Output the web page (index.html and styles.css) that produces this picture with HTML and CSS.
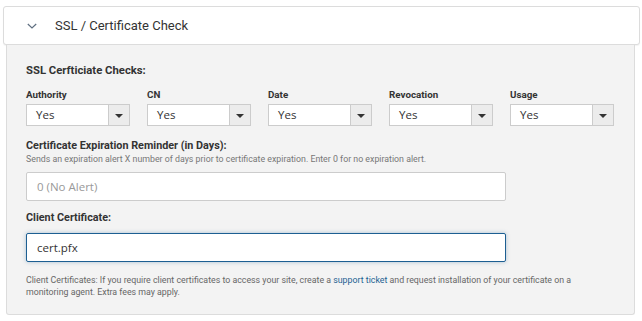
FILE: index.html
```html
<!DOCTYPE html>
<html lang="en">
<head>
  <meta charset="UTF-8">
  <meta name="viewport" content="width=device-width, initial-scale=1.0">
  <title>SSL / Certificate Check</title>
  <link rel="stylesheet" href="styles.css">
</head>
<body>
  <div class="section">
    <div class="section-head">
      <svg class="chevron" width="10" height="8" viewBox="0 0 10 8">
        <path d="M0.8 2 L5 6 L9.2 2" fill="none" stroke="#5f6f80" stroke-width="1.2"/>
      </svg>
      <span class="section-title">SSL / Certificate Check</span>
    </div>
    <div class="section-body">
      <div class="group-title">SSL Cerfticiate Checks:</div>
      <div class="checks">
        <div class="check">
          <label>Authority</label>
          <div class="select"><span>Yes</span><span class="arrow"></span></div>
        </div>
        <div class="check">
          <label>CN</label>
          <div class="select"><span>Yes</span><span class="arrow"></span></div>
        </div>
        <div class="check">
          <label>Date</label>
          <div class="select"><span>Yes</span><span class="arrow"></span></div>
        </div>
        <div class="check">
          <label>Revocation</label>
          <div class="select"><span>Yes</span><span class="arrow"></span></div>
        </div>
        <div class="check">
          <label>Usage</label>
          <div class="select"><span>Yes</span><span class="arrow"></span></div>
        </div>
      </div>

      <div class="field">
        <label>Certificate Expiration Reminder (in Days):</label>
        <div class="hint">Sends an expiration alert X number of days prior to certificate expiration. Enter 0 for no expiration alert.</div>
        <div class="input placeholder">0 (No Alert)</div>
      </div>

      <div class="field client">
        <label>Client Certificate:</label>
        <div class="input focused">cert.pfx</div>
      </div>

      <p class="note">Client Certificates: If you require client certificates to access your site, create a <a href="#">support ticket</a> and request installation of your certificate on a monitoring agent. Extra fees may apply.</p>
    </div>
  </div>
</body>
</html>
```

FILE: styles.css
```css
body {
  margin: 0;
  padding: 6px 2px 0 3px;
  background: #fff;
  font-family: Roboto, "Liberation Sans", sans-serif;
  color: #333;
}
.section-head {
  display: flex;
  align-items: center;
  height: 37px;
  border: 1px solid #dcdcdc;
  border-radius: 3px;
  background: #fff;
  box-shadow: 0 1px 1px rgba(0,0,0,0.05);
}
.chevron {
  margin-left: 23px;
  margin-right: 18px;
}
.section-title {
  font-size: 13px;
  color: #333;
}
.section-body {
  margin: 0 5px 0 3px;
  background: #f3f3f3;
  border: 1px solid #dcdcdc;
  border-top: none;
  border-radius: 0 0 3px 3px;
  padding: 19px 19px 16px 19px;
}
.group-title {
  font-size: 11.3px;
  line-height: 14px;
  font-weight: bold;
  color: #333;
  margin-bottom: 11px;
}
.checks {
  display: flex;
  gap: 17px;
}
label {
  display: block;
  font-size: 10.8px;
  line-height: 12px;
  font-weight: bold;
  color: #333;
}
.check label {
  font-size: 9.8px;
  margin-bottom: 3px;
}
.select {
  display: flex;
  width: 102px;
  height: 20px;
  border: 1px solid #ccc;
  background: #fff;
  font-family: "Open Sans", sans-serif;
  font-size: 11.5px;
  color: #333;
}
.select span:first-child {
  flex: 1;
  padding-left: 9px;
  line-height: 20px;
}
.arrow {
  width: 20px;
  background: #ececec;
  border-left: 1px solid #ccc;
  display: flex;
  align-items: center;
  justify-content: center;
}
.arrow::after {
  content: "";
  border-left: 4px solid transparent;
  border-right: 4px solid transparent;
  border-top: 4px solid #333;
  margin-top: 1px;
}
.field {
  margin-top: 14px;
}
.hint {
  font-size: 8.8px;
  line-height: 12px;
  color: #777;
  margin: 1px 0 7px;
}
.input {
  width: 468px;
  height: 27px;
  line-height: 27px;
  padding-left: 10px;
  border: 1px solid #ccc;
  border-radius: 2px;
  background: #fff;
  font-family: "Open Sans", sans-serif;
  font-size: 11.5px;
  color: #333;
}
.placeholder {
  color: #999;
}
.field.client {
  margin-top: 11px;
}
.field.client label {
  margin-bottom: 9px;
}
.input.focused {
  border-color: #1d5f92;
  box-shadow: 0 0 4px rgba(29,95,146,0.35);
}
.note {
  margin: 12px 0 0;
  max-width: 580px;
  font-size: 8.8px;
  line-height: 12px;
  color: #666;
}
.note a {
  color: #1d5f92;
  text-decoration: none;
}
```
